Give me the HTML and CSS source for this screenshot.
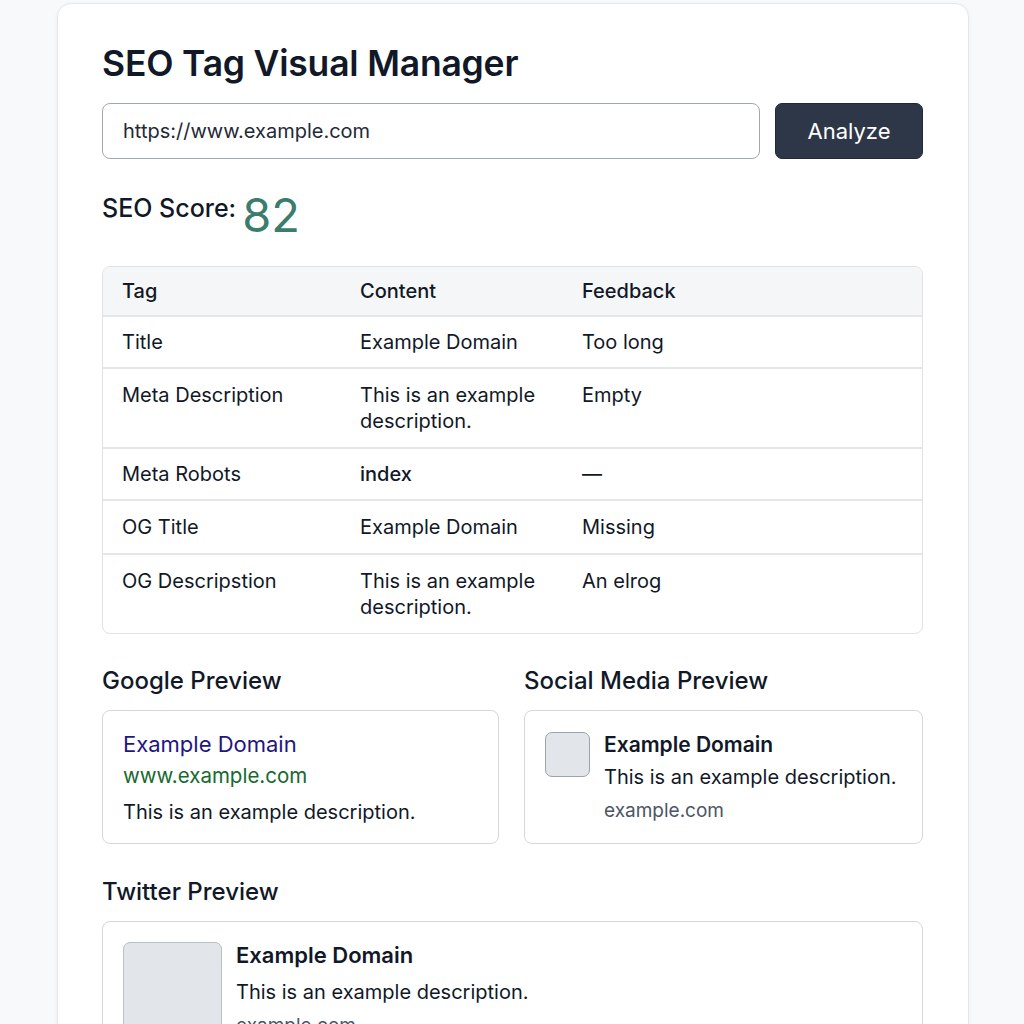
FILE: index.html
```html
<!DOCTYPE html>
<html lang="en">
<head>
<meta charset="utf-8">
<title>SEO Tag Visual Manager</title>
<link rel="stylesheet" href="styles.css">
</head>
<body>
<main class="card">
  <h1 class="title">SEO Tag Visual Manager</h1>
  <form class="url-form">
    <input class="url-input" type="text" value="https://www.example.com">
    <button class="analyze-btn" type="button">Analyze</button>
  </form>
  <div class="score">
    <span class="score-label">SEO Score:</span>
    <span class="score-value">82</span>
  </div>
  <div class="table-wrap">
    <table class="tags">
      <thead>
        <tr><th class="c-tag">Tag</th><th class="c-content">Content</th><th>Feedback</th></tr>
      </thead>
      <tbody>
        <tr><td>Title</td><td>Example Domain</td><td>Too long</td></tr>
        <tr class="tall"><td>Meta Description</td><td>This is an example description.</td><td>Empty</td></tr>
        <tr><td>Meta Robots</td><td class="strong">index</td><td>—</td></tr>
        <tr class="og"><td>OG Title</td><td>Example Domain</td><td>Missing</td></tr>
        <tr class="tall"><td>OG Descripstion</td><td>This is an example description.</td><td>An elrog</td></tr>
      </tbody>
    </table>
  </div>
  <div class="previews">
    <section class="preview">
      <h2 class="section-title">Google Preview</h2>
      <div class="box google">
        <div class="g-title">Example Domain</div>
        <div class="g-url">www.example.com</div>
        <div class="g-desc">This is an example description.</div>
      </div>
    </section>
    <section class="preview">
      <h2 class="section-title">Social Media Preview</h2>
      <div class="box social">
        <div class="thumb small"></div>
        <div class="s-text">
          <div class="s-title">Example Domain</div>
          <div class="s-desc">This is an example description.</div>
          <div class="s-domain">example.com</div>
        </div>
      </div>
    </section>
  </div>
  <section class="twitter">
    <h2 class="section-title">Twitter Preview</h2>
    <div class="box tw">
      <div class="thumb large"></div>
      <div class="s-text">
        <div class="t-title">Example Domain</div>
        <div class="t-desc">This is an example description.</div>
        <div class="t-domain">example.com</div>
      </div>
    </div>
  </section>
</main>
</body>
</html>
```
FILE: styles.css
```css
* { box-sizing: border-box; }
html, body { margin: 0; padding: 0; }
body {
  background: #f8f9fa;
  font-family: Inter, "Noto Sans", "Liberation Sans", sans-serif;
  color: #111827;
}
.card {
  width: 912px;
  margin: 3px 0 0 57px;
  background: #ffffff;
  border: 1px solid #e5e7eb;
  border-radius: 14px;
  box-shadow: 0 1px 4px rgba(0,0,0,0.05);
  padding: 38px 45px 60px 44px;
}
.title {
  margin: 0 0 17px;
  font-size: 35.5px;
  line-height: 44px;
  font-weight: 600;
  color: #111827;
  letter-spacing: -0.2px;
}
.url-form {
  display: flex;
  gap: 15px;
  margin: 0;
}
.url-input {
  flex: 1;
  height: 56px;
  border: 1px solid #a0a8b6;
  border-radius: 8px;
  padding: 0 20px;
  font-family: inherit;
  font-size: 20px;
  color: #1f2937;
  background: #fff;
}
.analyze-btn {
  width: 148px;
  height: 56px;
  border: 1px solid #1f2937;
  border-radius: 7px;
  background: #2d3748;
  color: #fff;
  font-family: inherit;
  font-size: 22px;
}
.score {
  display: flex;
  align-items: flex-start;
  gap: 6px;
  margin-top: 30px;
  height: 77px;
}
.score-label {
  font-size: 25px;
  font-weight: 500;
  line-height: 36px;
  margin-top: 1px;
}
.score-value {
  font-size: 47px;
  line-height: 56px;
  font-weight: 400;
  color: #3b7c6c;
  margin-top: -2px;
}
.table-wrap {
  border: 1px solid #dfe2e6;
  border-radius: 8px;
  overflow: hidden;
}
.tags {
  width: 100%;
  border-collapse: collapse;
  font-size: 20px;
  line-height: 26px;
}
.tags th, .tags td {
  text-align: left;
  vertical-align: top;
  padding: 12px 20px 12px 19px;
}
.tags th {
  font-weight: 500;
  background: #f5f6f8;
  padding: 11px 20px 11px 19px;
}
.tags tbody tr td { border-top: 2px solid #e3e6ea; }
.tags tbody tr.tall td { padding-top: 13px; padding-bottom: 13px; }
.tags tbody tr.og td { padding-top: 13px; padding-bottom: 13px; }
.c-tag { width: 238px; }
.c-content { width: 222px; }
.strong { font-weight: 500; }
.previews {
  display: grid;
  grid-template-columns: 397px 399px;
  column-gap: 25px;
  margin-top: 31px;
}
.section-title {
  margin: 0 0 13px;
  font-size: 24px;
  line-height: 32px;
  font-weight: 500;
  color: #111827;
}
.box {
  border: 1px solid #d4d8de;
  border-radius: 8px;
  background: #fff;
}
.google {
  height: 134px;
  padding: 17px 20px;
}
.g-title {
  font-size: 22px;
  line-height: 32px;
  color: #1f1680;
}
.g-url {
  font-size: 20.5px;
  line-height: 32px;
  color: #17692e;
}
.g-desc {
  font-size: 20px;
  line-height: 40px;
  color: #111827;
}
.social {
  height: 134px;
  display: flex;
  gap: 14px;
  padding: 21px 20px;
}
.thumb {
  flex: none;
  background: #e2e5e9;
  border: 1px solid #9aa3ae;
  border-radius: 7px;
}
.thumb.small { width: 45px; height: 45px; }
.thumb.large { width: 99px; height: 120px; border-color: #b9bfc7; }
.s-title {
  font-size: 21px;
  line-height: 24px;
  font-weight: 600;
  margin-top: 1px;
}
.s-desc {
  font-size: 20px;
  line-height: 32px;
  margin-top: 4px;
}
.s-domain {
  font-size: 19px;
  line-height: 34px;
  margin-top: 1px;
  color: #4b5563;
}
.twitter { margin-top: 32px; }
.tw {
  display: flex;
  gap: 14px;
  padding: 20px 20px 0;
  height: 140px;
}
.t-title {
  font-size: 22px;
  line-height: 26px;
  font-weight: 600;
}
.t-desc {
  font-size: 20px;
  line-height: 38px;
  margin-top: 5px;
}
.t-domain {
  font-size: 19px;
  line-height: 30px;
  color: #4b5563;
}
```
